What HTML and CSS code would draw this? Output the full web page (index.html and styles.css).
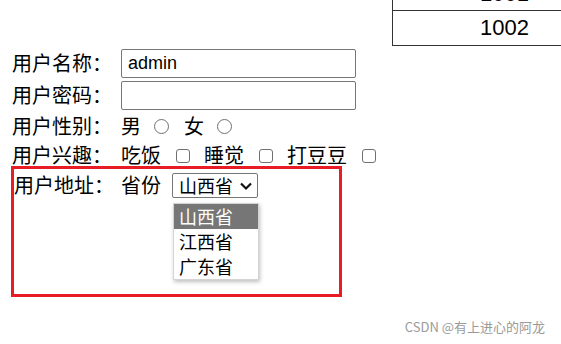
FILE: index.html
```html
<!DOCTYPE html>
<html lang="en">
<head>
  <meta charset="UTF-8" />
  <title>表单</title>
  <link rel="stylesheet" href="styles.css">
</head>
<body>
  <div class="top">
    <table class="ids">
      <tr><td class="first">1001</td></tr>
      <tr><td>1002</td></tr>
    </table>
  </div>

  <form class="form">
    <div class="row row-1">
      <span class="label">用户名称：</span>
      <input class="text" type="text" value="admin" />
    </div>
    <div class="row row-2">
      <span class="label">用户密码：</span>
      <input class="text" type="password" />
    </div>
    <div class="row row-3">
      <span class="label">用户性别：</span>
      <span>男</span><input class="radio" type="radio" name="sex" />
      <span>女</span><input class="radio" type="radio" name="sex" />
    </div>
    <div class="row row-4">
      <span class="label">用户兴趣：</span>
      <span>吃饭</span><input class="check" type="checkbox" />
      <span>睡觉</span><input class="check" type="checkbox" />
      <span>打豆豆</span><input class="check" type="checkbox" />
    </div>

    <div class="address">
      <div class="row row-5">
        <span class="label">用户地址：</span>
        <span>省份</span>
        <div class="select-wrap">
          <select class="select">
            <option>山西省</option>
            <option>江西省</option>
            <option>广东省</option>
          </select>
          <svg class="chevron" width="14" height="10" viewBox="0 0 14 10">
            <path d="M2 2.5 L7 7.5 L12 2.5" fill="none" stroke="#111" stroke-width="2.2" />
          </svg>
          <ul class="dropdown">
            <li class="picked">山西省</li>
            <li>江西省</li>
            <li>广东省</li>
          </ul>
        </div>
      </div>
    </div>
  </form>

  <div class="mark">CSDN @有上进心的阿龙</div>
</body>
</html>
```

FILE: styles.css
```css
body {
  margin: 0;
  overflow: hidden;
  background-color: white;
  color: #000;
  font-family: "Noto Sans CJK SC", "Liberation Sans", sans-serif;
  font-size: 20px;
}
.top {
  display: flex;
  justify-content: flex-end;
}
.ids {
  border-collapse: collapse;
  width: 225px;
  margin-top: -23px;
  margin-right: -56px;
  font-family: "Liberation Sans", sans-serif;
  font-size: 22px;
}
.ids td {
  border: 1px solid #333;
  height: 34px;
  padding: 0;
  text-align: center;
  line-height: 34px;
}
.ids td.first {
  height: 32px;
  line-height: 32px;
}
.form {
  padding-left: 12px;
  position: relative;
}
.row {
  display: flex;
  align-items: center;
  line-height: 28px;
  white-space: nowrap;
}
.row-1 {
  height: 32px;
  margin-top: 1px;
}
.row-2 {
  height: 32px;
}
.row-3 {
  height: 30px;
}
.row-4 {
  height: 28px;
  margin-bottom: -3px;
}
.label {
  width: 109px;
}
.text {
  box-sizing: border-box;
  width: 235px;
  height: 29px;
  margin: 0;
  padding: 0 6px;
  border: 1px solid #767676;
  border-radius: 2px;
  font-family: "Liberation Sans", sans-serif;
  font-size: 18px;
  color: #000;
}
.radio,
.check {
  appearance: none;
  box-sizing: border-box;
  flex: none;
  border: 1px solid #707070;
  background: white;
}
.radio {
  width: 15px;
  height: 15px;
  margin: 1px 15px 0 13px;
  border-radius: 50%;
}
.check {
  width: 14px;
  height: 14px;
  margin: 2px 14px 0 15px;
  border-radius: 3px;
}
.address {
  box-sizing: border-box;
  width: 331px;
  height: 131px;
  margin-left: -1px;
  border: 3px solid #e81c24;
}
.row-5 {
  height: 32px;
}
.row-5 .label {
  width: 107px;
}
.select-wrap {
  position: relative;
  margin-left: 11px;
}
.select {
  display: block;
  box-sizing: border-box;
  width: 86px;
  height: 25px;
  margin: 0;
  padding: 0 0 0 6px;
  border: 1px solid #767676;
  border-radius: 2px;
  background: white;
  appearance: none;
  font-family: "Noto Sans CJK SC", sans-serif;
  font-size: 18px;
  line-height: 23px;
  color: #000;
}
.chevron {
  position: absolute;
  left: 67px;
  top: 8px;
}
.dropdown {
  position: absolute;
  left: 1px;
  top: 30px;
  width: 86px;
  box-sizing: border-box;
  margin: 0;
  padding: 0;
  list-style: none;
  background: white;
  border: 1px solid #d4d4d4;
  box-shadow: 1px 2px 4px rgba(0, 0, 0, 0.25);
  font-size: 18px;
}
.dropdown li {
  height: 25px;
  line-height: 25px;
  padding-left: 5px;
}
.dropdown .picked {
  background-color: #767676;
  color: white;
}
.mark {
  position: absolute;
  right: 16px;
  bottom: 8px;
  font-size: 13px;
  color: #9a9a9a;
}
```
